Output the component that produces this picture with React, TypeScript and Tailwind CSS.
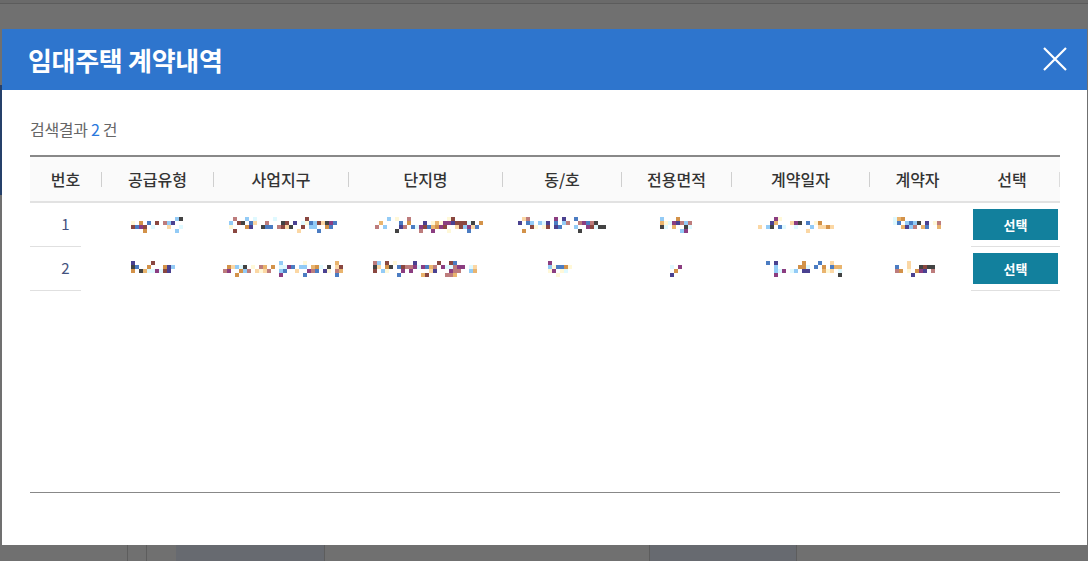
const COLS = [
    { label: '번호', sep: false },
    { label: '공급유형', sep: true },
    { label: '사업지구', sep: true },
    { label: '단지명', sep: true },
    { label: '동/호', sep: true },
    { label: '전용면적', sep: true },
    { label: '계약일자', sep: true },
    { label: '계약자', sep: true },
    { label: '선택', sep: false },
];

// blurred (mosaic) cell contents: [width, seed]
const ROWS: [number, number][][] = [
    [[50, 11], [110, 23], [116, 37], [86, 41], [32, 53], [84, 67], [46, 71]],
    [[52, 83], [122, 97], [104, 101], [28, 113], [10, 127], [82, 131], [42, 139]],
];

const PALETTE = [
    '#dff9ff', '#fff8d8', '#fbd7a4', '#d39249', '#434343', '#8b3d80',
    '#4a4190', '#4b7cc2', '#93cbf6', '#8a4740', '#bd7c7c', '#e9b46e',
];

function Mosaic({ width, seed }: { width: number; seed: number }) {
    let s = seed * 9301 + 49297;
    const rnd = () => {
        s = (s * 9301 + 49297) % 233280;
        return s / 233280;
    };
    const cols = Math.max(1, Math.round(width / 4));
    const probs = [0.2, 0.6, 0.55, 0.15];
    const rects = [];
    for (let c = 0; c < cols; c++) {
        for (let r = 0; r < 4; r++) {
            if (rnd() < probs[r]) {
                const color = PALETTE[Math.floor(rnd() * PALETTE.length)];
                rects.push(
                    <rect key={c + '-' + r} x={c * 4} y={r * 4} width={4} height={4} fill={color} />
                );
            }
        }
    }
    return (
        <svg width={cols * 4} height={16} viewBox={`0 0 ${cols * 4} 16`} shapeRendering="crispEdges">
            {rects}
        </svg>
    );
}

export default function App() {
    return (
        <div
            className="relative w-[1088px] h-[561px] overflow-hidden bg-[#707070]"
            style={{ fontFamily: '"Noto Sans CJK KR", "Noto Sans", sans-serif' }}
        >
            {/* dimmed page behind the modal */}
            <div className="h-[4px] bg-[#6a6a6a] border-b border-[#5c5c5c]" />
            <div className="absolute left-0 top-[85px] w-[2px] h-[110px] bg-[#25406a]" />
            <div className="absolute left-0 bottom-0 w-full h-[16px] flex">
                <div className="w-[127px]" />
                <div className="w-px bg-[#5d5d5d]" />
                <div className="w-[18px]" />
                <div className="w-px bg-[#5d5d5d]" />
                <div className="w-[29px]" />
                <div className="w-[149px] bg-[#676a70] border-r border-[#5d5d5d]" />
                <div className="w-[324px]" />
                <div className="w-[148px] bg-[#676a70] border-x border-[#5d5d5d]" />
            </div>

            {/* modal */}
            <div className="absolute left-[2px] top-[29px] w-[1085px] h-[516px] bg-white flex flex-col">
                <div className="h-[61px] bg-[#2e75cd] flex items-center justify-between pl-[26px] pr-[20px]">
                    <h2 className="text-white text-[26px] font-bold tracking-[-0.3px]">임대주택 계약내역</h2>
                    <svg width="24" height="24" viewBox="0 0 24 24" className="mt-[-2px]">
                        <path d="M1 1 L23 23 M23 1 L1 23" stroke="white" strokeWidth="2.2" />
                    </svg>
                </div>

                <div className="px-[28px] pt-[28px]">
                    <p className="text-[16px] leading-[22px] text-[#666] mb-[15px] tracking-[-0.3px]">
                        검색결과 <span className="text-[#2a78dd]">2</span> 건
                    </p>

                    <div className="w-[1030px]">
                        <div className="grid grid-cols-[71px_112px_135px_154px_119px_110px_138px_96px_95px] h-[48px] border-t-2 border-[#888] border-b-2 border-b-[#e2e2e2] bg-[#fafafa]">
                            {COLS.map((c, i) => (
                                <div key={c.label} className="flex items-center">
                                    {c.sep && <span className="w-px h-[15px] bg-[#cfcfcf]" />}
                                    <span className="flex-1 text-center text-[16px] text-[#333] font-medium">
                                        {c.label}
                                    </span>
                                    {i === COLS.length - 1 && <span className="w-px h-[15px] bg-[#dcdcdc]" />}
                                </div>
                            ))}
                        </div>

                        <div className="h-[290px] border-b border-[#888]">
                            {ROWS.map((row, ri) => (
                                <div
                                    key={ri}
                                    className="grid grid-cols-[71px_112px_135px_154px_119px_110px_138px_96px_95px] h-[44px]"
                                >
                                    <div className="flex flex-col">
                                        <div className="flex-1 flex items-center justify-center text-[15px] text-[#44527e]">
                                            {ri + 1}
                                        </div>
                                        <div className="h-px w-[51px] bg-[#e0e0e0]" />
                                    </div>
                                    {row.map(([w, seed], ci) => (
                                        <div key={ci} className="flex items-center justify-center">
                                            <Mosaic width={w} seed={seed} />
                                        </div>
                                    ))}
                                    <div className="flex flex-col">
                                        <div className="flex-1 flex items-center ml-[8px]">
                                            <button className="w-[85px] h-[31px] bg-[#12809d] text-white text-[13px] font-bold">
                                                선택
                                            </button>
                                        </div>
                                        <div className="h-px ml-[6px] w-[89px] bg-[#e0e0e0]" />
                                    </div>
                                </div>
                            ))}
                        </div>
                    </div>
                </div>
            </div>
        </div>
    );
}
